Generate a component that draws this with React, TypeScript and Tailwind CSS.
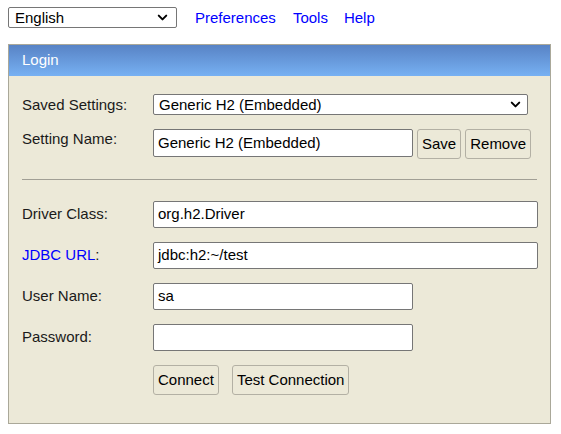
import { ChevronDown } from "lucide-react";

const font = "font-['Liberation_Sans',Arial,sans-serif]";

function Field({
  label,
  value = "",
  wide = false,
  link = false,
  mt,
}: {
  label: string;
  value?: string;
  wide?: boolean;
  link?: boolean;
  mt: string;
}) {
  return (
    <div className={`flex items-center ${mt}`}>
      <div className="w-[131px] shrink-0 text-[15px] leading-[18px] text-[#1a1a1a] -mt-[2px]">
        {link ? (
          <>
            <span className="text-[#0000ff]">JDBC URL</span>:
          </>
        ) : (
          label
        )}
      </div>
      <div
        className={`h-[27px] ${wide ? "w-[385px]" : "w-[260px]"} bg-white border border-[#767676] rounded-[2px] px-[4px] flex items-center text-[15px] text-black`}
      >
        {value}
      </div>
    </div>
  );
}

function Btn({ children }: { children: string }) {
  return (
    <div className="h-[30px] px-[4px] flex items-center border border-[#b3b0a4] rounded-[3px] bg-[#ece9d8] text-[15px] text-black">
      {children}
    </div>
  );
}

export default function App() {
  return (
    <div className={`${font} bg-white w-[561px] h-[434px] px-[8px] pt-[7px]`}>
      <div className="flex items-center h-[21px] leading-[18px]">
        <div className="w-[169px] h-[21px] border border-[#767676] rounded-[2px] bg-white flex items-center justify-between pl-[6px] pr-[6px] text-[15px] text-black">
          <span>English</span>
          <ChevronDown size={15} strokeWidth={3.2} />
        </div>
        <a className="ml-[18px] text-[15px] text-[#0000ff]">Preferences</a>
        <a className="ml-[17px] text-[15px] text-[#0000ff]">Tools</a>
        <a className="ml-[16px] text-[15px] text-[#0000ff]">Help</a>
      </div>

      <div className="mt-[16px] w-[543px] h-[380px] border border-[#aaa899] bg-[#ece9d8]">
        <div className="h-[31px] bg-gradient-to-b from-[#5883c5] to-[#77b1f3] text-white text-[15px] pl-[13px] flex items-center">
          Login
        </div>

        <div className="pl-[13px]">
          <div className="flex items-center h-[21px] mt-[18px] leading-[18px]">
            <div className="w-[131px] shrink-0 text-[15px] text-[#1a1a1a]">Saved Settings:</div>
            <div className="w-[375px] h-[21px] border border-[#767676] rounded-[2px] bg-white flex items-center justify-between pl-[5px] pr-[4px] text-[15px] text-black">
              <span>Generic H2 (Embedded)</span>
              <ChevronDown size={15} strokeWidth={3.2} />
            </div>
          </div>

          <div className="flex items-start mt-[14px]">
            <div className="w-[131px] shrink-0 text-[15px] leading-[18px] text-[#1a1a1a] pt-[1px]">Setting Name:</div>
            <div className="h-[28px] w-[260px] bg-white border border-[#767676] rounded-[2px] px-[4px] flex items-center text-[15px] text-black">
              Generic H2 (Embedded)
            </div>
            <div className="ml-[4px] flex gap-[4px]">
              <Btn>Save</Btn>
              <Btn>Remove</Btn>
            </div>
          </div>

          <div className="mt-[20px] w-[515px] h-px bg-[#a19f95]" />

          <Field label="Driver Class:" value="org.h2.Driver" wide mt="mt-[21px]" />
          <Field label="JDBC URL:" value="jdbc:h2:~/test" wide link mt="mt-[14px]" />
          <Field label="User Name:" value="sa" mt="mt-[14px]" />
          <Field label="Password:" mt="mt-[14px]" />

          <div className="flex gap-[13px] mt-[14px] ml-[131px]">
            <Btn>Connect</Btn>
            <Btn>Test Connection</Btn>
          </div>
        </div>
      </div>
    </div>
  );
}
